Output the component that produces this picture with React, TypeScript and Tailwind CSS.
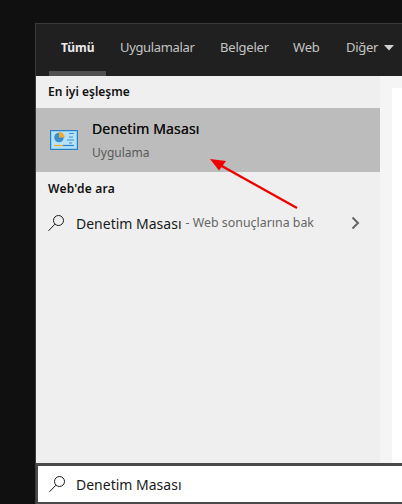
import React from "react";

const Search = () => (
  <svg width="18" height="18" viewBox="0 0 18 18" fill="none" stroke="#1a1a1a" strokeWidth="1">
    <circle cx="11.5" cy="6.5" r="5" />
    <path d="M7.9 10.2 L1.5 16.8" />
  </svg>
);

export default function App() {
  return (
    <div className="relative w-[402px] h-[504px] overflow-hidden bg-[#101010] pt-[23px] pl-[35px] [font-family:'Noto_Sans',sans-serif]">
      <div className="w-[367px] h-[481px] flex flex-col border-l border-t border-[#3a3a3a]">
        <div className="h-[52px] shrink-0 bg-[#202020] relative flex items-center pl-[25px] pb-[5px] whitespace-nowrap">
          <span className="w-[59px] text-[12px] font-bold text-[#ececec]">Tümü</span>
          <span className="w-[100px] text-[13px] tracking-[-0.35px] text-[#c4c4c4]">Uygulamalar</span>
          <span className="w-[73px] text-[13px] tracking-[-0.2px] text-[#c4c4c4]">Belgeler</span>
          <span className="w-[53px] text-[13px] tracking-[-0.2px] text-[#c4c4c4]">Web</span>
          <span className="flex items-center gap-[6px] text-[13px] tracking-[-0.3px] text-[#c4c4c4]">
            Diğer
            <svg width="10" height="6" viewBox="0 0 10 6"><path d="M0 0H10L5 5.5Z" fill="#d0d0d0" /></svg>
          </span>
          <div className="absolute left-[13px] bottom-0 w-[57px] h-[5px] bg-[#505050]" />
        </div>
        <div className="flex-1 flex min-h-0">
          <div className="w-[344px] shrink-0 bg-[#efefef] flex flex-col">
            <div className="h-[32px] flex items-center pl-[12px] text-[12px] font-semibold text-[#111]">En iyi eşleşme</div>
            <div className="h-[64px] bg-[#bcbcbc] flex items-center pl-[14px] gap-[14px]">
              <svg width="28" height="20" viewBox="0 0 28 20">
                <rect x="0.5" y="0.5" width="27" height="19" fill="#8ccdf2" stroke="#2a7fc0" />
                <rect x="2" y="2" width="24" height="16" fill="#b5e2f8" />
                <circle cx="9" cy="7.5" r="4.8" fill="#3b8fd0" />
                <path d="M9 7.5V1.8A5.7 5.7 0 0 1 14.7 7.5Z" fill="#f2a92c" />
                <path d="M19 3.5h5M19 7h4M17 10h7M19 13h3" stroke="#3b8fd0" strokeWidth="1.2" />
                <path d="M4 15.5h9" stroke="#f2a92c" strokeWidth="1.2" />
                <path d="M13 15.5h11" stroke="#2f83c8" strokeWidth="1.2" />
              </svg>
              <div className="flex flex-col gap-[6px] -mt-[1px]">
                <div className="text-[14px] leading-[20px] tracking-[0.15px] text-[#111] [text-shadow:0_0_0.4px_#111]">Denetim Masası</div>
                <div className="text-[12px] leading-[16px] text-[#5a5a5a]">Uygulama</div>
              </div>
            </div>
            <div className="h-[33px] flex items-center pl-[12px] text-[12px] font-semibold tracking-[0.25px] text-[#111]">Web'de ara</div>
            <div className="h-[36px] flex items-center pl-[11px] pr-[20px] whitespace-nowrap">
              <Search />
              <span className="ml-[11px] text-[14px] text-[#1a1a1a]">Denetim Masası</span>
              <span className="ml-[4px] text-[12.4px] text-[#666]">- Web sonuçlarına bak</span>
              <svg className="ml-auto" width="9" height="14" viewBox="0 0 9 14" fill="none" stroke="#666" strokeWidth="2">
                <path d="M1.5 1.5 L7 7 L1.5 12.5" />
              </svg>
            </div>
          </div>
          <div className="w-[12px] shrink-0 bg-[#f5f5f5]" />
          <div className="flex-1 flex flex-col">
            <div className="h-[12px] bg-[#f5f5f5]" />
            <div className="flex-1 bg-white" />
          </div>
        </div>
        <div className="h-[41px] shrink-0 bg-white border-[#4a4a4a] border-t-[3px] border-b-[2px] border-l-[2px] flex items-center pl-[10px]">
          <Search />
          <span className="ml-[10px] text-[14px] text-[#1a1a1a]">Denetim Masası</span>
        </div>
      </div>
      <svg className="absolute left-[205px] top-[152px]" width="100" height="60" viewBox="205 152 100 60" fill="none">
        <path d="M297 208 L220 165" stroke="#f00000" strokeWidth="2.4" />
        <path d="M210 159 L226 161 L219 170.5 Z" fill="#f00000" />
      </svg>
    </div>
  );
}
